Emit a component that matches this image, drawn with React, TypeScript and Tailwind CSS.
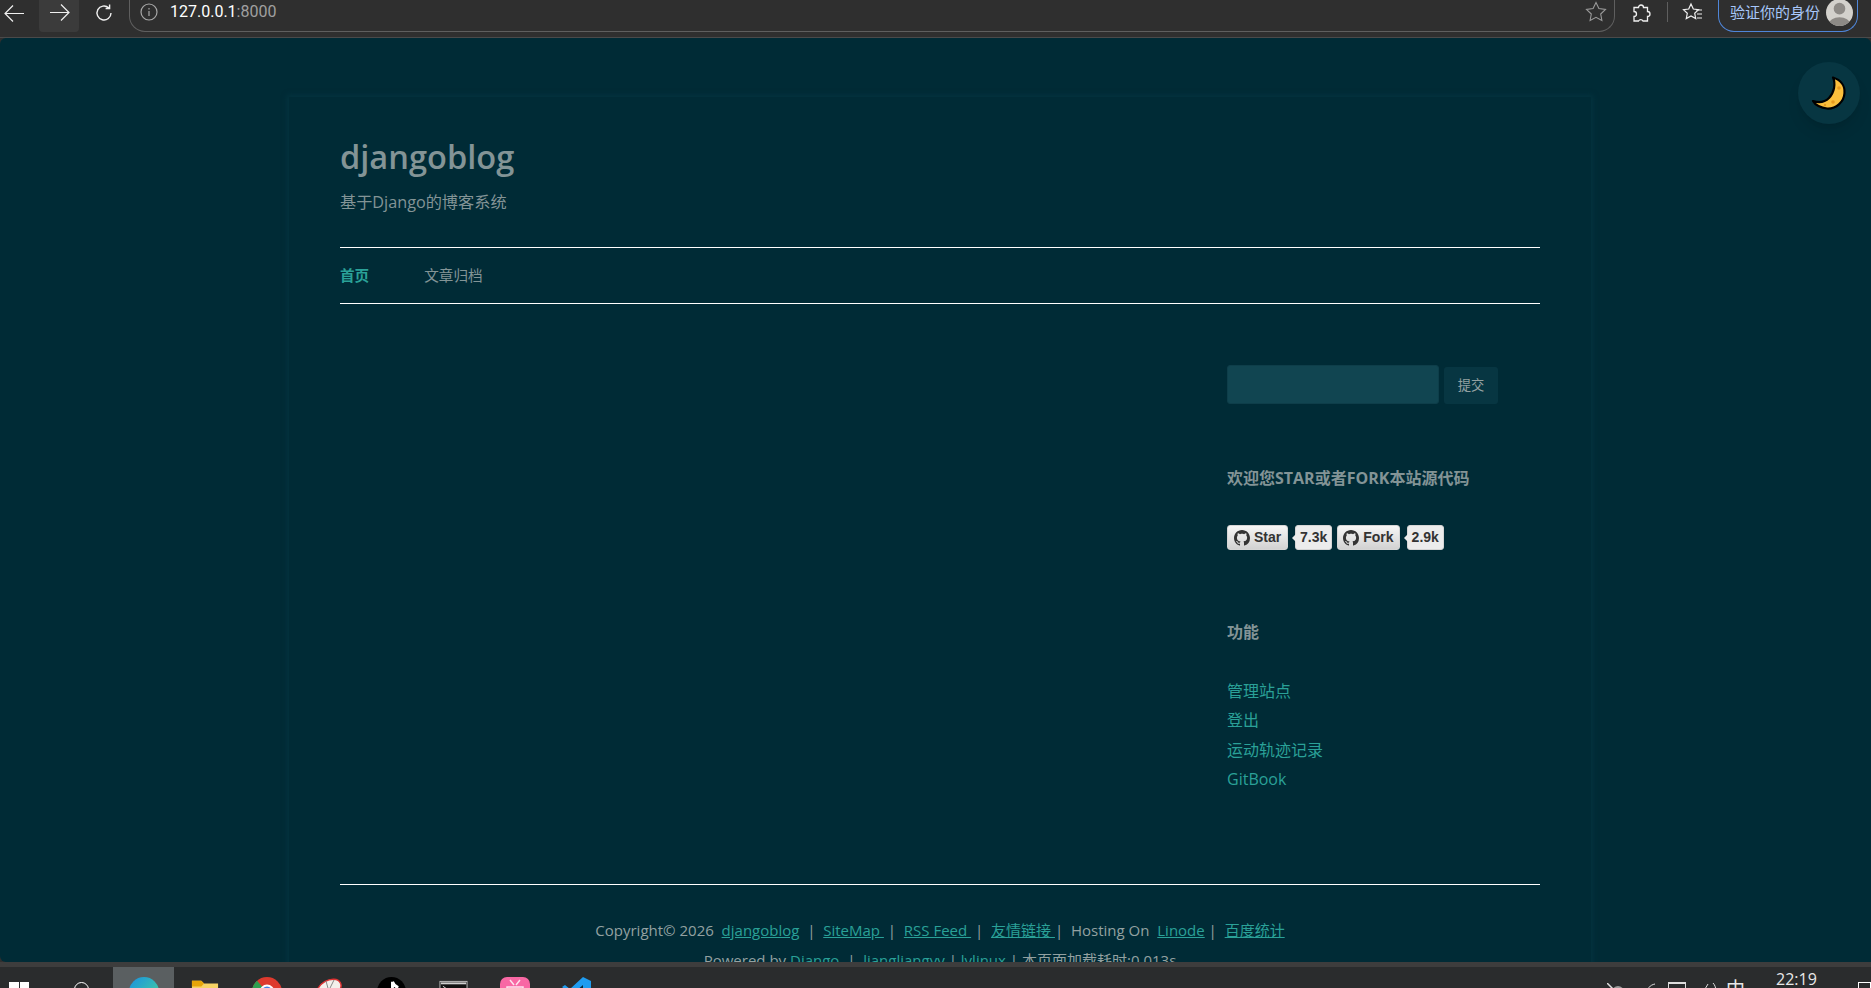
import React from 'react';

const cjk = "font-['Open_Sans','Noto_Sans_CJK_SC',sans-serif]";

const GithubMark = () => (
  <svg viewBox="0 0 16 16" className="w-[16px] h-[16px] shrink-0" fill="#333">
    <path d="M8 0C3.58 0 0 3.58 0 8c0 3.54 2.29 6.53 5.47 7.59.4.07.55-.17.55-.38 0-.19-.01-.82-.01-1.49-2.01.37-2.53-.49-2.69-.94-.09-.23-.48-.94-.82-1.13-.28-.15-.68-.52-.01-.53.63-.01 1.08.58 1.23.82.72 1.21 1.87.87 2.33.66.07-.52.28-.87.51-1.07-1.78-.2-3.64-.89-3.64-3.95 0-.87.31-1.59.82-2.15-.08-.2-.36-1.02.08-2.12 0 0 .67-.21 2.2.82.64-.18 1.32-.27 2-.27s1.36.09 2 .27c1.53-1.04 2.2-.82 2.2-.82.44 1.1.16 1.92.08 2.12.51.56.82 1.27.82 2.15 0 3.07-1.87 3.75-3.65 3.95.29.25.54.73.54 1.48 0 1.07-.01 1.93-.01 2.2 0 .21.15.46.55.38A8.01 8.01 0 0 0 16 8c0-4.42-3.58-8-8-8z" />
  </svg>
);

const Badge = ({ label, count }: { label: string; count: string }) => (
  <div className="flex items-center gap-[7px]">
    <div className="min-w-[61px] h-[25px] flex items-center justify-center gap-[4px] px-[5px] rounded-[3px] border border-[#d5d5d5] bg-gradient-to-b from-[#f6f6f6] to-[#d2d2d2] font-['Liberation_Sans',sans-serif] font-bold text-[14px] text-[#333]">
      <GithubMark />
      {label}
    </div>
    <div className="relative h-[25px] flex items-center px-[4px] rounded-[3px] border border-[#d5d5d5] bg-[#ececec] font-['Liberation_Sans',sans-serif] font-bold text-[14px] text-[#333]">
      <span className="absolute left-[-4px] top-[8px] w-0 h-0 border-y-[4px] border-y-transparent border-r-[4px] border-r-[#ececec]" />
      {count}
    </div>
  </div>
);

const BrowserBar = () => (
  <div className="h-[38px] shrink-0 bg-[#2f2f2f] border-b border-[#4a4a4a] flex items-start overflow-hidden">
    <div className="w-[39px] h-[25px] flex items-center pl-[2px]">
      <svg width="24" height="24" viewBox="0 0 24 24" fill="none" stroke="#f0f0f0" strokeWidth="1.2"><path d="M22 12.5H3M11 4.5l-8 8 8 8" /></svg>
    </div>
    <div className="w-[40px] h-[32px] flex items-start justify-center bg-[#3b3b3b] rounded-b-[4px]">
      <svg width="24" height="24" viewBox="0 0 24 24" fill="none" stroke="#f0f0f0" strokeWidth="1.2"><path d="M3 12.500h19M14 4.500l8 8-8 8" /></svg>
    </div>
    <div className="w-[49px] h-[25px] flex items-center justify-center">
      <svg width="20" height="20" viewBox="0 0 20 20" fill="none" stroke="#f0f0f0" strokeWidth="1.4"><path d="M17 10a7 7 0 1 1-2.300-5.200M15.600 1.500v4h-4" /></svg>
    </div>
    <div className="ml-[1px] flex-1 h-[33px] rounded-b-[16px] border-b border-x border-[#5f5f5f] flex items-center justify-between pl-[10px] pr-[7px] pb-[6px] mt-[-1px]">
      <div className="flex items-center">
        <svg width="18" height="18" viewBox="0 0 18 18" fill="none" stroke="#a8a8a8" strokeWidth="1.2"><circle cx="9" cy="9" r="8" /><path d="M9 8v5M9 5v1.400" /></svg>
        <span className="ml-[12px] font-['Roboto',sans-serif] text-[16px] text-white">127.0.0.1<span className="text-[#a0a0a0]">:8000</span></span>
      </div>
      <svg width="22" height="22" viewBox="0 0 22 22" fill="none" stroke="#9a9a9a" strokeWidth="1.1"><path d="M11 1.500l2.900 6 6.600.9-4.800 4.600 1.200 6.500-5.900-3.200-5.900 3.200 1.200-6.500L1.500 8.400l6.600-.9z" /></svg>
    </div>
    <div className="w-[52px] h-[25px] flex items-center justify-center">
      <svg width="20" height="20" viewBox="0 0 20 20" fill="none" stroke="#f0f0f0" strokeWidth="1.3"><path d="M7.500 4.500a2.500 2.500 0 0 1 5 0h4v4a2.500 2.500 0 0 1 0 5v4.500h-4.500a2.500 2.500 0 0 0-4.500 0H3v-4.500a2.500 2.500 0 0 0 0-5v-4z" /></svg>
    </div>
    <div className="w-px h-[20px] mt-[2px] bg-[#5f5f5f]" />
    <div className="w-[50px] h-[25px] flex items-center justify-center">
      <svg width="22" height="22" viewBox="0 0 22 22" fill="none" stroke="#f0f0f0" strokeWidth="1.2"><path d="M9 2l2.300 5 5.200.7-3.800 3.600 1 5.200L9 13.900 4.300 16.500l1-5.200L1.500 7.700 6.700 7z" /><path d="M14 8h6M15 12h5M15 16h5" /></svg>
    </div>
    <div className="mt-[-1px] mr-[13px] w-[140px] h-[33px] rounded-b-[16px] border-x border-b border-[#4f86d9] flex items-center justify-between pl-[11px] pr-[4px] pb-[6px]">
      <span className={`text-[15px] text-[#a8c7fa] whitespace-nowrap ${cjk}`}>验证你的身份</span>
      <svg width="27" height="27" viewBox="0 0 28 28" className="shrink-0">
        <defs><clipPath id="avatar"><circle cx="14" cy="14" r="14" /></clipPath></defs>
        <circle cx="14" cy="14" r="14" fill="#d3d1cc" />
        <g clipPath="url(#avatar)" fill="#8d8a86"><circle cx="14" cy="10" r="6" /><ellipse cx="14" cy="26" rx="11" ry="7" /></g>
      </svg>
    </div>
  </div>
);

const taskIcons = [
  { pad: 'pt-[13px]', icon: <svg width="28" height="24" viewBox="0 0 30 24"><path d="M1 0h10l3 3h15v21H1z" fill="#f6d365" /><path d="M1 0h10l3 3-3 3H1z" fill="#e5a50a" /></svg> },
  { pad: 'pt-[10px]', icon: <svg width="30" height="30" viewBox="0 0 30 30"><circle cx="15" cy="15" r="15" fill="#dd3a2e" /><path d="M15 15L5 3.800A15 15 0 0 0 15 30z" fill="#2e9e4f" /><circle cx="15" cy="15" r="7.500" fill="#fff" /><circle cx="15" cy="15" r="5.500" fill="#3f83e8" /></svg> },
  { pad: 'pt-[11px]', icon: <svg width="26" height="30" viewBox="0 0 26 30"><ellipse cx="13" cy="11" rx="13" ry="8.500" transform="rotate(-30 13 11)" fill="#f3f0ec" stroke="#d33" strokeWidth="1.500" /><path d="M10 3l5 18M18 2l-5 10" stroke="#888" fill="none" /></svg> },
  { pad: 'pt-[10px]', icon: <svg width="29" height="29" viewBox="0 0 30 30"><circle cx="15" cy="15" r="15" fill="#000" /><path d="M16 5v14a3 3 0 1 1-3-3M16 5c1 3 3 5 6 6" stroke="#fff" strokeWidth="3" fill="none" /></svg> },
  { pad: 'pt-[13px]', icon: <svg width="29" height="26" viewBox="0 0 30 26"><rect x="1" y="1" width="28" height="24" fill="#111" stroke="#bdbdbd" /><rect x="2" y="2" width="26" height="2" fill="#cfcfcf" /><path d="M4 6l3 2-3 2M9 9h14" stroke="#ddd" fill="none" /></svg> },
  { pad: 'pt-[10px]', icon: <svg width="30" height="30" viewBox="0 0 30 30"><rect width="30" height="30" rx="7" fill="#f868a4" /><path d="M10 3l4 5M20 3l-4 5M7 10h16v12H7z" stroke="#fde3ee" strokeWidth="1.500" fill="none" /></svg> },
  { pad: 'pt-[10px]', icon: <svg width="30" height="30" viewBox="0 0 30 30"><path d="M21 0l8 4v22l-8 4L8 18l-5 4-3-2 6-5-6-5 3-2 5 4z" fill="#1f9cf0" /><path d="M21 8v14l-8-7z" fill="#0b2a3a" /></svg> },
];

const Taskbar = () => (
  <div className="h-[26px] shrink-0 bg-[#2a2c2d] border-t-[5px] border-[#3d3d3d] flex overflow-hidden">
    <div className="w-[50px] pl-[9px] pt-[15px]">
      <div className="w-[20px] grid grid-cols-2 gap-[1px]">
        <div className="h-[9px] bg-white" /><div className="h-[9px] bg-white" />
      </div>
    </div>
    <div className="w-[63px] flex justify-center pt-[15px]">
      <div className="w-[15px] h-[15px] rounded-full border-[1.5px] border-white shrink-0" />
    </div>
    <div className="w-[61px] bg-[#5a5f61] flex justify-center pt-[10px]">
      <div className="w-[30px] h-[30px] rounded-full bg-gradient-to-br from-[#1f8fe0] to-[#52d68a] shrink-0" />
    </div>
    <div className="flex">
      {taskIcons.map((item, i) => (
        <div key={i} className={`w-[62px] flex justify-center ${item.pad}`}>{item.icon}</div>
      ))}
    </div>
    <div className="flex-1" />
    <div className="flex">
      <div className="w-[17px] pt-[16px]">
        <svg width="17" height="16" viewBox="0 0 17 16"><path d="M0 0l7 7" stroke="#ddd" strokeWidth="1.500" /><circle cx="11" cy="9" r="6" fill="#9a9a9a" /></svg>
      </div>
      <div className="w-[22px]" />
      <div className="w-[10px] pt-[16px]">
        <svg width="10" height="14" viewBox="0 0 10 14" fill="none" stroke="#ddd"><path d="M9 1C4 2 1 5 1 12" /></svg>
      </div>
      <div className="w-[12px]" />
      <div className="w-[18px] pt-[15px]">
        <div className="w-[18px] h-[14px] border-t-[2px] border-x border-[#ddd]" />
      </div>
      <div className="w-[15px]" />
      <div className="w-[17px] pt-[15px]">
        <svg width="17" height="14" viewBox="0 0 17 14" fill="none" stroke="#ddd"><path d="M1 12L7 2M12 1c2 2 3 5 3 9" /></svg>
      </div>
      <div className="w-[8px]" />
      <div className={`w-[20px] pt-[13px] text-[19px] leading-none text-[#e8e8e8] ${cjk}`}>中</div>
      <div className="w-[30px]" />
      <div className={`w-[82px] pt-[4px] text-[16px] leading-none text-[#e8e8e8] ${cjk}`}>22:19</div>
      <div className="w-[13px] pt-[15px]">
        <div className="w-[13px] h-[12px] border border-white bg-[#2a2c2d]" />
      </div>
    </div>
  </div>
);

export default function App() {
  return (
    <div className={`h-screen flex flex-col overflow-hidden bg-[#2f2f2f] ${cjk}`}>
      <BrowserBar />
      <main className="relative flex-1 min-h-0 overflow-hidden bg-[#002b36] rounded-t-[6px] rounded-bl-[6px]">
        <button className="absolute top-[24px] right-[11px] w-[62px] h-[62px] rounded-full bg-[#073642] shadow-lg flex items-center justify-center">
          <svg width="36" height="36" viewBox="0 0 36 36">
            <path d="M22 2.500C30 5 34 11 33.500 18C33 27 25 34 16 33.500C10 33 4 30 2 26C8 28 14 27 18 23C23 18 25 9 22 2.500Z" fill="#fbbf3c" stroke="#000" strokeWidth="2.200" strokeLinejoin="round" />
            <circle cx="28" cy="13" r="1.800" fill="#e79a1f" /><circle cx="22" cy="27" r="1.800" fill="#e79a1f" /><circle cx="14" cy="30" r="1.200" fill="#e79a1f" />
          </svg>
        </button>
        <div className="ml-[289px] mt-[59px] w-[1302px] shadow-[0_0_5px_2px_#04333f] px-[51px] pt-[38px] h-[1000px]">
          <header>
            <h1 className="text-[32.6px] leading-[44px] font-semibold text-[#839496]">djangoblog</h1>
            <p className="mt-[11px] text-[16.2px] leading-[24px] text-[#839496]">基于Django的博客系统</p>
            <nav className="mt-[33px] h-[57px] border-y border-white flex items-center text-[14.6px]">
              <a className="font-bold text-[#2aa198]">首页</a>
              <a className="ml-[55px] text-[#839496]">文章归档</a>
            </nav>
          </header>
          <div className="flex mt-[61px]">
            <div className="flex-1" />
            <aside className="w-[313px] shrink-0 h-[519px]">
              <div className="flex items-end gap-[5px]">
                <div className="w-[212px] h-[39px] bg-[#114551] rounded-[3px] border border-[#0e3e4a]" />
                <button className="w-[54px] h-[37px] bg-[#073642] rounded-[3px] text-[13.3px] text-[#93a1a1]">提交</button>
              </div>
              <h3 className="mt-[62px] text-[16px] leading-[24px] font-bold text-[#839496]">欢迎您STAR或者FORK本站源代码</h3>
              <div className="mt-[35px] flex gap-[5px]">
                <Badge label="Star" count="7.3k" />
                <Badge label="Fork" count="2.9k" />
              </div>
              <h3 className="mt-[70px] text-[16px] leading-[24px] font-bold text-[#839496]">功能</h3>
              <ul className="mt-[33px] text-[16px] leading-[29.4px] text-[#2aa198]">
                <li>管理站点</li>
                <li>登出</li>
                <li>运动轨迹记录</li>
                <li>GitBook</li>
              </ul>
            </aside>
          </div>
          <footer className="border-t border-white pt-[30px] text-center text-[15px] leading-[30px] text-[#93a1a1]">
            <p>
              Copyright© 2026&nbsp; <a className="underline text-[#2aa198]">djangoblog</a>&nbsp; |&nbsp; <a className="underline text-[#2aa198]">SiteMap&nbsp;</a>&nbsp;|&nbsp; <a className="underline text-[#2aa198]">RSS Feed&nbsp;</a>&nbsp;|&nbsp; <a className="underline text-[#2aa198]">友情链接&nbsp;</a>|&nbsp; Hosting On&nbsp; <a className="underline text-[#2aa198]">Linode</a>&nbsp;|&nbsp; <a className="underline text-[#2aa198]">百度统计</a>
            </p>
            <p>
              Powered by <a className="text-[#2aa198]">Django</a>&nbsp; |&nbsp; <a className="text-[#2aa198]">liangliangyy</a> | <a className="text-[#2aa198]">lylinux</a> | 本页面加载耗时:0.013s
            </p>
          </footer>
        </div>
      </main>
      <Taskbar />
    </div>
  );
}
